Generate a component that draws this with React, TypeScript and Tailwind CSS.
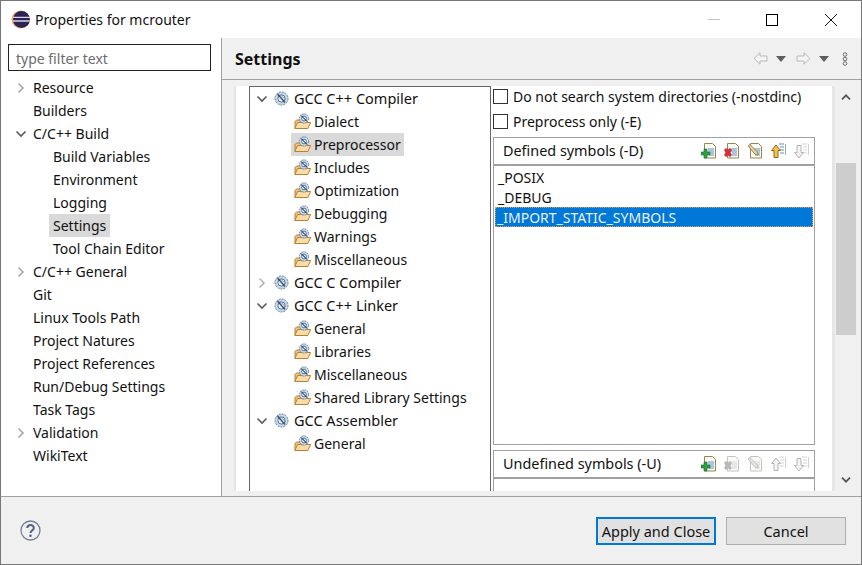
import React from 'react';

const leftTree = [
  { label: 'Resource', arrow: 'right' },
  { label: 'Builders' },
  { label: 'C/C++ Build', arrow: 'down' },
  { label: 'Build Variables', child: true },
  { label: 'Environment', child: true },
  { label: 'Logging', child: true },
  { label: 'Settings', child: true, selected: true },
  { label: 'Tool Chain Editor', child: true },
  { label: 'C/C++ General', arrow: 'right' },
  { label: 'Git' },
  { label: 'Linux Tools Path' },
  { label: 'Project Natures' },
  { label: 'Project References' },
  { label: 'Run/Debug Settings' },
  { label: 'Task Tags' },
  { label: 'Validation', arrow: 'right' },
  { label: 'WikiText' },
];

const toolTree = [
  { label: 'GCC C++ Compiler', arrow: 'down' },
  { label: 'Dialect' },
  { label: 'Preprocessor', selected: true },
  { label: 'Includes' },
  { label: 'Optimization' },
  { label: 'Debugging' },
  { label: 'Warnings' },
  { label: 'Miscellaneous' },
  { label: 'GCC C Compiler', arrow: 'right' },
  { label: 'GCC C++ Linker', arrow: 'down' },
  { label: 'General' },
  { label: 'Libraries' },
  { label: 'Miscellaneous' },
  { label: 'Shared Library Settings' },
  { label: 'GCC Assembler', arrow: 'down' },
  { label: 'General' },
];

function Chevron({ dir, light }: { dir?: string; light?: boolean }) {
  if (!dir) return null;
  const color = dir === 'down' ? '#5a5a5a' : light ? '#b4b4b4' : '#a6a6a6';
  return (
    <svg width="12" height="12" viewBox="0 0 12 12" fill="none" stroke={color} strokeWidth="1.6">
      {dir === 'down' ? <path d="M1.5 3.5 6 8l4.5-4.5" /> : <path d="M3.5 1.5 8 6l-4.5 4.5" />}
    </svg>
  );
}

function Gear({ size = 15 }: { size?: number }) {
  return (
    <svg width={size} height={size} viewBox="0 0 15 15">
      <circle cx="7.5" cy="7.5" r="6.5" fill="#c4d8ea" stroke="#5c82a8" strokeDasharray="2 1" />
      <circle cx="7.5" cy="7.5" r="3.6" fill="#eef4f9" stroke="#54749a" />
      <path d="M3.5 3 11 11.5" stroke="#3f4f66" strokeWidth="1.4" />
      <path d="M5.5 3 12 9" stroke="#8aa0b8" />
    </svg>
  );
}

function FolderGear() {
  return (
    <svg width="18" height="17" viewBox="0 0 18 17">
      <path d="M1 15V8.5L2.5 7H6l1-1h4v9z" fill="#f0c27e" stroke="#b9802f" />
      <path d="M.8 15.5 3.6 9.5h13l-2.8 6z" fill="#fbdca6" stroke="#b9802f" />
      <circle cx="10" cy="5.5" r="4.6" fill="#cfdeee" stroke="#5c82a8" strokeDasharray="1.6 .8" />
      <circle cx="10" cy="5.5" r="2.4" fill="#eef4f9" stroke="#54749a" />
      <path d="M7.2 2.6 13 8.4" stroke="#3f4f66" strokeWidth="1.2" />
    </svg>
  );
}

function DocIcon({ kind, off }: { kind: string; off?: boolean }) {
  const edge = off ? '#c4c4c4' : '#97844f';
  const line = off ? '#d4d4d4' : '#5b8fc7';
  return (
    <svg width="16" height="16" viewBox="0 0 16 16" className="shrink-0">
      {kind === 'up' || kind === 'down' ? (
        <>
          <path d="M9 1h5M10 4h4M10 7h4M10 10h4" stroke={line} />
          <path d="M15.5 1v11" stroke={off ? '#d0d0d0' : '#9aa7b5'} />
          {kind === 'up' ? (
            <path d="M6 2 1.5 7.5H4v7h4v-7h2.500z" fill={off ? '#f4f4f4' : '#f5c24c'} stroke={off ? '#b4b4b4' : '#8c6a1c'} />
          ) : (
            <path d="M6 15 1.5 9.5H4v-7h4v7h2.500z" fill={off ? '#f4f4f4' : '#f5c24c'} stroke={off ? '#b4b4b4' : '#8c6a1c'} />
          )}
        </>
      ) : (
        <>
          <path d="M3.5.5h8l3 3v11.500h-11z" fill="#fbfbf6" stroke={edge} />
          <path d="M7 6h6M7 8h6M8 10h5M8 12h5" stroke={line} />
          {kind === 'add' && (
            <path d="M3 6h3v3h3v3H6v3H3v-3H0V9h3z" fill={off ? '#ccc' : '#2f9d42'} stroke={off ? '#aaa' : '#1c6b2b'} strokeWidth=".6" />
          )}
          {kind === 'del' && (
            <path d="M0 7l2-2 2 1.500L6 5l2 2-1.500 2.500L8 12l-2 2-2-1.500L2 14l-2-2 1.500-2.500z" fill={off ? '#b8b8b8' : '#d62f3c'} />
          )}
          {kind === 'edit' && (
            <path d="M1 3l2-1.500L10.500 9l.5 3-3-.8z" fill={off ? '#e4e4e4' : '#e9cf93'} stroke={off ? '#b8b8b8' : '#8c7240'} strokeWidth=".8" />
          )}
        </>
      )}
    </svg>
  );
}

function SymbolBar({ title, icons }: { title: string; icons: { kind: string; off?: boolean }[] }) {
  return (
    <div className="h-[27px] flex items-center border border-[#a0a0a0] border-b-0 pl-[9px] pr-[5px] text-[14.4px]">
      <span>{title}</span>
      <div className="ml-auto flex gap-[7px]">
        {icons.map((ic) => (
          <DocIcon key={ic.kind} kind={ic.kind} off={ic.off} />
        ))}
      </div>
    </div>
  );
}

function NavArrow({ flip }: { flip?: boolean }) {
  return (
    <svg width="15" height="13" viewBox="0 0 15 13" fill="#f4f4f4" stroke="#b8b8b8" className={flip ? 'rotate-180' : ''}>
      <path d="M7 .8 1 6.500l6 5.700V9h7V4H7z" />
    </svg>
  );
}

function NavDrop() {
  return (
    <svg width="10" height="6" viewBox="0 0 10 6" fill="#5e5e5e">
      <path d="M0 0h10L5 6z" />
    </svg>
  );
}

function Checkbox({ label }: { label: string }) {
  return (
    <div className="h-[25px] flex items-center gap-[5px]">
      <span className="w-[15px] h-[15px] border border-[#333] bg-white shrink-0" />
      <span>{label}</span>
    </div>
  );
}

export default function App() {
  return (
    <div
      className="w-[862px] h-[565px] border border-[#777] bg-white flex flex-col overflow-hidden text-[14px] text-[#111]"
      style={{ fontFamily: '"Noto Sans", "Open Sans", sans-serif' }}
    >
      {/* title bar */}
      <div className="h-[37px] shrink-0 flex items-center pl-[10px]">
        <svg width="19" height="19" viewBox="0 0 19 19">
          <circle cx="9.500" cy="9.500" r="9" fill="#f0a860" />
          <circle cx="10.500" cy="9.500" r="8.500" fill="#2c2255" />
          <path d="M2 7.300h17M1.800 11h17" stroke="#d8d6e6" strokeWidth="1.300" />
        </svg>
        <span className="ml-[5px]">Properties for mcrouter</span>
        <div className="ml-auto flex items-center">
          <div className="w-[12px] h-px bg-[#c4c4c4]" />
          <div className="w-[12px] h-[12px] border border-black ml-[46px]" />
          <svg width="12" height="12" viewBox="0 0 12 12" stroke="#111" className="ml-[47px] mr-[24px]">
            <path d="M0 0l12 12M12 0 0 12" />
          </svg>
        </div>
      </div>

      <div className="flex flex-1 min-h-0">
        {/* left nav */}
        <div className="w-[221px] shrink-0 border-r border-[#a0a0a0] bg-white pl-[7px]">
          <div className="w-[203px] h-[27px] mt-[6px] border border-[#222] flex items-center pl-[7px] pt-[2px] text-[#6d6d6d]">
            type filter text
          </div>
          <div className="mt-[5px]">
            {leftTree.map((row) => (
              <div key={row.label} className={`h-[23px] flex items-center ${row.child ? 'pl-[45px]' : 'pl-[25px]'}`}>
                {row.arrow && (
                  <span className="-ml-[18px] w-[18px] flex">
                    <Chevron dir={row.arrow} />
                  </span>
                )}
                <span className={row.selected ? 'bg-[#d9d9d9] h-[23px] leading-[23px] px-[4px] -ml-[4px]' : ''}>{row.label}</span>
              </div>
            ))}
          </div>
        </div>

        {/* right page */}
        <div className="flex-1 min-w-0 bg-[#f0f0f0] flex flex-col">
          <div className="h-[42px] shrink-0 border-b border-[#a0a0a0] flex items-center pl-[13px] pr-[13px]">
            <span className="font-bold text-[16px] pt-px">Settings</span>
            <div className="ml-auto flex items-center">
              <NavArrow />
              <span className="ml-[8px]"><NavDrop /></span>
              <span className="ml-[10px]"><NavArrow flip /></span>
              <span className="ml-[8px]"><NavDrop /></span>
              <svg width="6" height="14" viewBox="0 0 6 14" fill="none" stroke="#6e6e6e" className="ml-[13px]">
                <circle cx="3" cy="2.500" r="1.800" />
                <circle cx="3" cy="7" r="1.800" />
                <circle cx="3" cy="11.500" r="1.800" />
              </svg>
            </div>
          </div>

          <div className="flex-1 min-h-0 flex pl-[12px] pr-[5px] pb-[5px]">
            <div className="flex-1 min-w-0 mt-[6px] flex border-l-2 border-r-[3px] border-[#e6e6e6] bg-white pl-[13px] overflow-hidden">
              {/* tool tree */}
              <div className="w-[242px] shrink-0 border border-[#666] border-b-0">
                {toolTree.map((row, i) => (
                  <div key={i} className={`h-[23px] flex items-center ${row.arrow ? 'pl-[6px]' : 'pl-[44px]'}`}>
                    {row.arrow ? (
                      <>
                        <Chevron dir={row.arrow} light />
                        <span className="ml-[6px] mr-[5px]"><Gear /></span>
                        <span className="text-[14.5px]">{row.label}</span>
                      </>
                    ) : (
                      <div className={`flex items-center h-[23px] pl-[3px] pr-[3px] -ml-[3px] ${row.selected ? 'bg-[#d9d9d9]' : ''}`}>
                        <FolderGear />
                        <span className="ml-[2px]">{row.label}</span>
                      </div>
                    )}
                  </div>
                ))}
              </div>

              {/* option panel */}
              <div className="w-[322px] shrink-0 ml-[2px] flex flex-col">
                <div className="h-[50px] shrink-0 -mt-[2px]">
                  <Checkbox label="Do not search system directories (-nostdinc)" />
                  <Checkbox label="Preprocess only (-E)" />
                </div>
                <div className="mt-[3px]">
                  <SymbolBar
                    title="Defined symbols (-D)"
                    icons={[{ kind: 'add' }, { kind: 'del' }, { kind: 'edit' }, { kind: 'up' }, { kind: 'down', off: true }]}
                  />
                  <div className="h-[281px] border border-[#a0a0a0] border-t-2 pt-[1px] pl-px pr-px">
                    <div className="h-[20px] leading-[22px] pl-[3px]">_POSIX</div>
                    <div className="h-[20px] leading-[22px] pl-[3px]">_DEBUG</div>
                    <div className="h-[20px] leading-[22px] pl-[2px] bg-[#0078d7] text-[#e8f0f8] outline outline-dotted outline-[#e0a060] -outline-offset-1">
                      _IMPORT_STATIC_SYMBOLS
                    </div>
                  </div>
                </div>
                <div className="mt-[5px]">
                  <SymbolBar
                    title="Undefined symbols (-U)"
                    icons={[{ kind: 'add' }, { kind: 'del', off: true }, { kind: 'edit', off: true }, { kind: 'up', off: true }, { kind: 'down', off: true }]}
                  />
                  <div className="h-[14px] border-x border-t-2 border-[#a0a0a0]" />
                </div>
              </div>
            </div>

            {/* scrollbar */}
            <div className="w-[20px] shrink-0 ml-[1px] flex flex-col items-center pt-[14px]">
              <svg width="10" height="6" viewBox="0 0 10 6" fill="none" stroke="#555" strokeWidth="1.800">
                <path d="M1 5.300l4-4 4 4" />
              </svg>
              <div className="w-full h-[172px] mt-[63px] bg-[#cdcdcd]" />
              <svg width="10" height="6" viewBox="0 0 10 6" fill="none" stroke="#555" strokeWidth="1.800" className="mt-auto mb-[8px]">
                <path d="M1 .700l4 4 4-4" />
              </svg>
            </div>
          </div>
        </div>
      </div>

      {/* footer */}
      <div className="h-[68px] shrink-0 border-t border-[#a0a0a0] bg-[#f0f0f0] flex items-center pl-[19px] pr-[15px] text-[14.5px]">
        <svg width="21" height="21" viewBox="0 0 21 21" fill="none">
          <circle cx="10.500" cy="10.500" r="9.500" stroke="#73819b" strokeWidth="1.300" />
          <path d="M7.300 8c.2-4 6.500-4 6.500 0 0 2.500-3.300 2.200-3.300 5" stroke="#4f628a" strokeWidth="2" />
          <circle cx="10.500" cy="15.800" r="1.300" fill="#4f628a" />
        </svg>
        <button className="ml-auto w-[120px] h-[28px] pt-[2px] bg-[#e1e1e1] border-2 border-[#0078d7]">Apply and Close</button>
        <button className="ml-[10px] w-[120px] h-[28px] pt-[2px] bg-[#e1e1e1] border border-[#adadad]">Cancel</button>
      </div>
    </div>
  );
}
